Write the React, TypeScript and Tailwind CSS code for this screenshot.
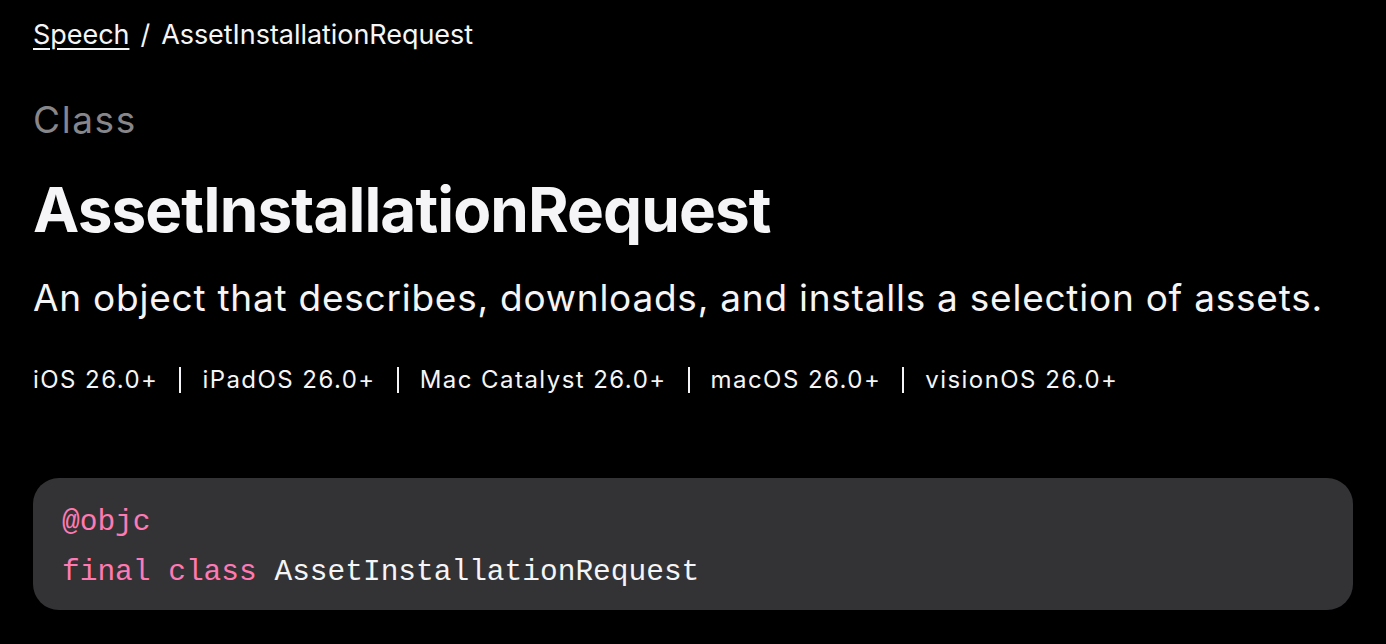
import React from "react";

export default function App() {
  const platforms = ["iOS 26.0+", "iPadOS 26.0+", "Mac Catalyst 26.0+", "macOS 26.0+", "visionOS 26.0+"];
  return (
    <div className="min-h-[644px] w-full bg-black text-[#f5f5f7] px-[33px] pt-[18px] font-['Inter','Noto_Sans',sans-serif]">
      <nav className="flex items-center text-[27px] leading-[34px] tracking-[-0.05px]">
        <span className="underline underline-offset-[4px] decoration-[2px]">Speech</span>
        <span className="mx-[11px]">/</span>
        <span>AssetInstallationRequest</span>
      </nav>
      <div className="mt-[46px] text-[37px] leading-[44px] text-[#86868b] tracking-[1.6px]">Class</div>
      <h1 className="mt-[33px] text-[62px] leading-[70px] font-bold tracking-[-0.9px]">AssetInstallationRequest</h1>
      <p className="mt-[30px] text-[37px] leading-[46px] tracking-[0.76px]">
        An object that describes, downloads, and installs a selection of assets.
      </p>
      <div className="mt-[44px] flex items-center text-[24px] leading-[30px] tracking-[1.45px]">
        {platforms.map((p, i) => (
          <React.Fragment key={p}>
            {i > 0 && <span className="mx-[21px] h-[26px] w-[2px] bg-[#f5f5f7]" />}
            <span>{p}</span>
          </React.Fragment>
        ))}
      </div>
      <div className="mt-[83px] rounded-[26px] bg-[#333336] pl-[29px] pr-[29px] pt-[19px] pb-[13px] font-['Liberation_Mono',monospace] text-[29.5px] leading-[50px]">
        <div className="text-[#ff7ab2]">@objc</div>
        <div>
          <span className="text-[#ff7ab2]">final</span> <span className="text-[#ff7ab2]">class</span>{" "}
          <span className="text-[#f5f5f7]">AssetInstallationRequest</span>
        </div>
      </div>
    </div>
  );
}
